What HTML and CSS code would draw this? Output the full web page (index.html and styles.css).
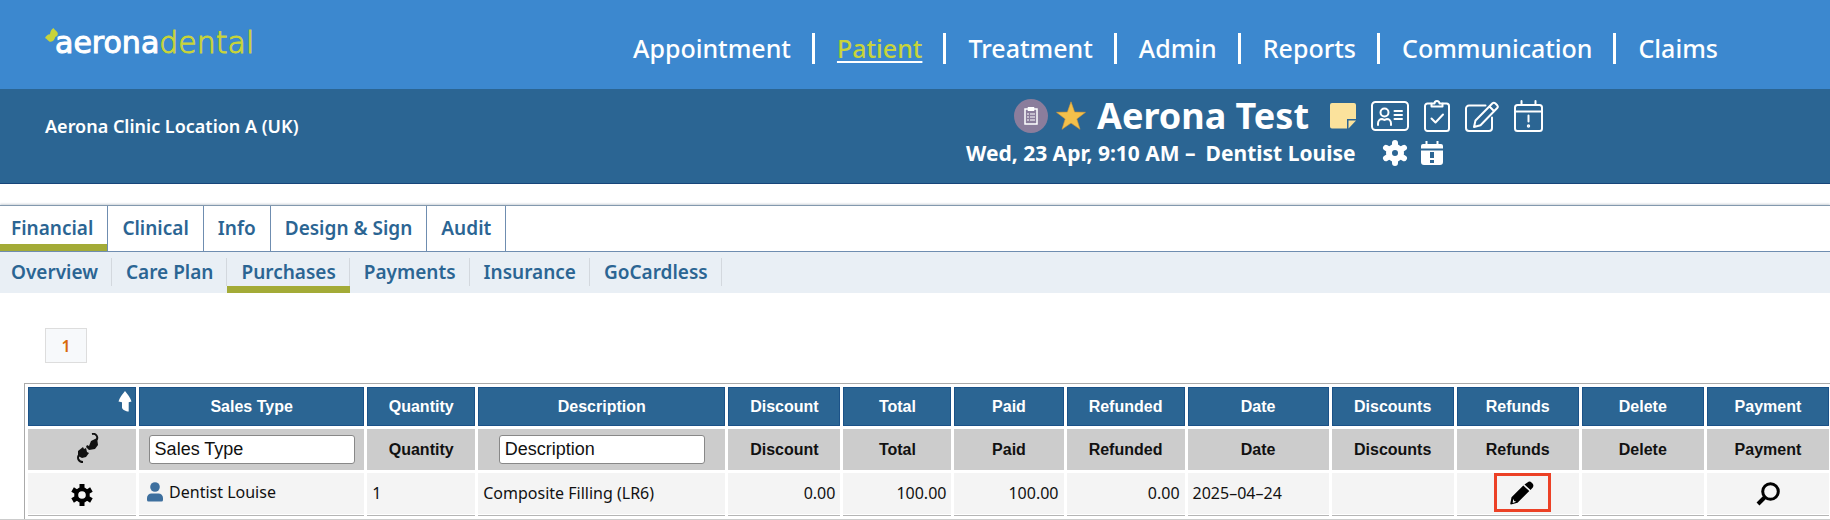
FILE: index.html
```html
<!DOCTYPE html>
<html lang="en">
<head>
<meta charset="utf-8">
<meta name="viewport" content="width=device-width, initial-scale=1">
<title>Aerona Dental – Purchases</title>
<link rel="stylesheet" href="styles.css">
</head>
<body>
<header class="topbar">
  <a class="logo" href="#">
    <svg class="logo-mark" width="14" height="15" viewBox="0 0 14 15" aria-hidden="true"><path fill="#c8d43a" d="M8.500 0c1 1.800 2.800 2.500 4 4.500 1 2-.3 4-2.200 4.500-.8 2.500-1.800 4.500-4.600 4.800C3.500 14 2.500 11 0 10c1.200-2 2.300-3.800 5-3.800C5.300 4 6 1.500 8.500 0z"/></svg>
    <span class="logo-strong">aerona</span><span class="logo-light">dental</span>
  </a>
  <nav class="mainnav" aria-label="Main">
    <a href="#">Appointment</a>
    <a href="#" class="active" aria-current="page">Patient</a>
    <a href="#">Treatment</a>
    <a href="#">Admin</a>
    <a href="#">Reports</a>
    <a href="#">Communication</a>
    <a href="#">Claims</a>
  </nav>
</header>

<section class="patientbar">
  <p class="location">Aerona Clinic Location A (UK)</p>
  <div class="patient">
    <div class="patient-head">
      <button class="badge" aria-label="Notes">
        <svg width="16" height="20" viewBox="0 0 16 20" fill="none" stroke="#fff" stroke-width="1.500"><path d="M2 3h12v15H2z"/><path fill="#fff" d="M5.500 1.800h5v2.400h-5z"/><path stroke-width="1.200" d="M4 8h2M7 8h5M4 11h2M7 11h5M4 14h2M7 14h5"/></svg>
      </button>
      <svg class="star" width="30" height="30" viewBox="0 0 30 30" aria-hidden="true"><path fill="#f3c04b" stroke="#d99b35" stroke-width=".6" d="M15 .8l3.600 10.300 10.900.2-8.700 6.600 3.200 10.400-9-6.200-9 6.200 3.200-10.400L.5 11.300l10.900-.2z"/></svg>
      <h1>Aerona Test</h1>
      <div class="tools">
        <button aria-label="Sticky note"><svg width="26" height="26" viewBox="0 0 26 26"><path fill="#fbe29c" d="M2 0h22a2 2 0 0 1 2 2v14h-9v9.500H2a2 2 0 0 1-2-2V2a2 2 0 0 1 2-2z"/><path fill="#fbe29c" d="M18.500 17.500H26l-7.500 8z"/></svg></button>
        <button aria-label="Patient card"><svg width="38" height="30" viewBox="0 0 38 30" fill="none" stroke="#fff" stroke-width="2" stroke-linecap="round"><rect x="1" y="1" width="36" height="28" rx="3.500"/><circle cx="13.500" cy="11.500" r="4"/><path d="M7 24v-1.500c0-3 2-4.500 4-4.500l2.500 1 2.500-1c2 0 4 1.500 4 4.500V24M23.500 10H31M23.500 14H31M23.500 18H31"/></svg></button>
        <button aria-label="Tasks"><svg width="26" height="34" viewBox="0 0 26 34" fill="none" stroke="#fff" stroke-width="2" stroke-linecap="round" stroke-linejoin="round"><path d="M7 4.500H3.500A2.500 2.500 0 0 0 1 7v22.500A2.500 2.500 0 0 0 3.500 32h19a2.500 2.500 0 0 0 2.500-2.500V7a2.500 2.500 0 0 0-2.500-2.500H19"/><path d="M7.500 7.500V4.500h3a2.500 2.500 0 0 1 5 0h3v3zM7.500 19.500l4 4 7.500-8"/></svg></button>
        <button aria-label="Edit patient"><svg width="34" height="31" viewBox="0 0 34 31" fill="none" stroke="#fff" stroke-width="2" stroke-linecap="round" stroke-linejoin="round"><path d="M20.500 4.500H4A3 3 0 0 0 1 7.500V27a3 3 0 0 0 3 3h20a3 3 0 0 0 3-3V16.500"/><path d="M9 26l1.500-6.500L27.500 2.300a2 2 0 0 1 2.700 0l2 2a2 2 0 0 1 0 2.700L15.500 24.300zM24.500 5.500l4.700 4.800"/></svg></button>
        <button aria-label="Appointment alert"><svg width="29" height="32" viewBox="0 0 29 32" fill="none" stroke="#fff" stroke-width="2" stroke-linecap="round"><rect x="1" y="5" width="27" height="26" rx="2.500"/><path d="M1 11.500h27M7.500 1v4M21.500 1v4M14.500 15.500v6"/><circle cx="14.500" cy="26" r=".7"/></svg></button>
      </div>
    </div>
    <div class="patient-sub">
      <span>Wed, 23 Apr, 9:10 AM –</span>
      <span>Dentist Louise</span>
      <div class="subtools">
        <button aria-label="Settings"><svg width="26" height="26" viewBox="0 0 26 26"><circle cx="13" cy="13" r="6" fill="none" stroke="#fff" stroke-width="6"/><path fill="none" stroke="#fff" stroke-width="6" stroke-linecap="round" d="M13 5V3M13 23v-2M6 9l-2-1.200M22 18.200L20 17M20 9l2-1.200M6 17l-2 1.200"/></svg></button>
        <button aria-label="Alerts"><svg width="22" height="24" viewBox="0 0 22 24"><path fill="#fff" d="M4.500 0h2v3h9V0h2v3H20a2 2 0 0 1 2 2v2.500H0V5a2 2 0 0 1 2-2h2.500zM0 9.500h22V21a3 3 0 0 1-3 3H3a3 3 0 0 1-3-3z"/><path fill="#2b6593" d="M9 11h4v6H9zM9 19h4v3H9z"/></svg></button>
      </div>
    </div>
  </div>
</section>

<main class="page">
  <nav class="tabs" aria-label="Patient sections">
    <a href="#" class="active">Financial</a>
    <a href="#">Clinical</a>
    <a href="#">Info</a>
    <a href="#">Design &amp; Sign</a>
    <a href="#">Audit</a>
  </nav>
  <nav class="subtabs" aria-label="Financial sections">
    <a href="#">Overview</a>
    <a href="#">Care Plan</a>
    <a href="#" class="active">Purchases</a>
    <a href="#">Payments</a>
    <a href="#">Insurance</a>
    <a href="#">GoCardless</a>
  </nav>

  <div class="pager"><button>1</button></div>

  <div class="grid-frame">
    <table class="grid">
      <colgroup>
        <col class="c-tool"><col class="c-type"><col class="c-qty"><col class="c-desc"><col class="c-disc"><col class="c-total"><col class="c-paid"><col class="c-refunded"><col class="c-date"><col class="c-action"><col class="c-action"><col class="c-action"><col class="c-action">
      </colgroup>
      <thead>
        <tr class="head">
          <th class="sort"><svg width="14" height="21" viewBox="0 0 14 21" role="img" aria-label="Sort ascending"><path fill="#fff" d="M7 0c2.500 3 5.500 7 6.500 10.500l-2.800.8V20.500C8 20.500 4 18.500 4 16.500v-5.200L.5 10.500C1.500 7 4.500 3 7 0z"/></svg></th>
          <th>Sales Type</th><th>Quantity</th><th>Description</th><th>Discount</th><th>Total</th><th>Paid</th><th>Refunded</th><th>Date</th><th>Discounts</th><th>Refunds</th><th>Delete</th><th>Payment</th>
        </tr>
        <tr class="filter">
          <th><button class="plug" aria-label="Connect"><svg width="24" height="30" viewBox="0 0 24 30"><path fill="none" stroke="#111" stroke-width="2" d="M16 1c4-1 6.500 3 4.500 6M7 29c-4.500 0-6.500-4-3.500-8"/><path fill="#111" d="M15 8l6-3 1 7-3 4-6 1-3-3 1-2 2 1zM2 18l5-4 1 2 2-1 1 4 2 1-3 4-4 1-4-2z"/></svg></button></th>
          <th><input type="text" aria-label="Sales Type" value="Sales Type"></th>
          <th>Quantity</th>
          <th><input type="text" aria-label="Description" value="Description"></th>
          <th>Discount</th><th>Total</th><th>Paid</th><th>Refunded</th><th>Date</th><th>Discounts</th><th>Refunds</th><th>Delete</th><th>Payment</th>
        </tr>
      </thead>
      <tbody>
        <tr>
          <td class="mid"><button aria-label="Row settings"><svg width="22" height="22" viewBox="0 0 22 22"><circle cx="11" cy="11" r="5.800" fill="none" stroke="#000" stroke-width="4"/><path fill="none" stroke="#000" stroke-width="5" d="M11 4.500V0M11 22v-4.500M5.400 7.800L1.600 5.500M20.400 16.500l-3.800-2.300M16.600 7.800l3.800-2.300M5.400 14.200l-3.800 2.300"/></svg></button></td>
          <td class="who"><div class="person"><svg width="16" height="20" viewBox="0 0 16 20" aria-hidden="true"><circle cx="8" cy="5" r="4.800" fill="#3d6f9e"/><path fill="#3d6f9e" d="M4.500 11.500h7a4.500 4.500 0 0 1 4.500 4.500v2a1.500 1.500 0 0 1-1.500 1.500h-13A1.500 1.500 0 0 1 0 18v-2a4.500 4.500 0 0 1 4.500-4.500z"/></svg>Dentist Louise</div></td>
          <td>1</td>
          <td>Composite Filling (LR6)</td>
          <td class="num">0.00</td>
          <td class="num">100.00</td>
          <td class="num">100.00</td>
          <td class="num">0.00</td>
          <td>2025–04–24</td>
          <td></td>
          <td class="mid refund"><button class="marked" aria-label="Refund"><svg width="24" height="24" viewBox="0 0 24 24"><path fill="#000" d="M18.500.8a3 3 0 0 1 3 .6l1 1a3.500 3.500 0 0 1 .5 3.800L20.500 9 14.500 3.500zM13.300 4.600l6 5.500L7.500 21.800 1 23.500c-.6 0-.8-.4-.7-1l1.200-6.300z"/><path fill="#f4f4f4" d="M3.200 17.800l1 2.200 2 .7-3.500 1.200z"/></svg></button></td>
          <td></td>
          <td class="mid"><button aria-label="View payment"><svg width="24" height="24" viewBox="0 0 24 24" fill="none" stroke="#000"><circle cx="14.500" cy="9.500" r="7.800" stroke-width="3"/><path stroke-width="4" d="M9.500 14.500L2 22"/></svg></button></td>
        </tr>
      </tbody>
    </table>
  </div>
</main>
</body>
</html>
```
FILE: styles.css
```css
* { box-sizing: border-box; }

body {
  margin: 0;
  background: #fff;
  color: #111;
  font-family: "Noto Sans", "Open Sans", sans-serif;
  font-size: 16px;
}

a { color: inherit; text-decoration: none; }

button {
  padding: 0;
  border: 0;
  background: none;
  font: inherit;
  color: inherit;
  cursor: pointer;
}

svg { display: block; }

/* Top bar */
.topbar {
  display: flex;
  justify-content: space-between;
  height: 89px;
  padding: 0 112px 0 45px;
  background: #3c88cf;
  color: #fff;
}

.logo {
  display: flex;
  align-items: flex-start;
  padding-top: 25px;
  font-family: "DejaVu Sans", sans-serif;
  font-size: 30px;
  line-height: 36px;
}

.logo-mark { margin: 3px -4px 0 0; }
.logo-strong { -webkit-text-stroke: 1px #fff; }

.logo-light {
  color: #c8d43a;
  font-weight: 200;
  -webkit-text-stroke: 1px #c8d43a;
}

.mainnav {
  display: flex;
  align-items: flex-start;
  padding-top: 33px;
  font-size: 25px;
  line-height: 31px;
  font-weight: 500;
}

.mainnav a + a {
  margin-left: 21px;
  padding-left: 22px;
  border-left: 3px solid #fff;
}

.mainnav .active {
  color: #c8d43a;
  text-decoration: underline #fff 2px;
  text-underline-offset: 3px;
}

/* Patient bar */
.patientbar {
  display: grid;
  grid-template-columns: 966fr 864fr;
  height: 95px;
  border-bottom: 1px solid #17457a;
  background: #2b6593;
  color: #fff;
}

.location {
  margin: 0;
  padding: 24px 0 0 45px;
  font-size: 18px;
  line-height: 26px;
  font-weight: 600;
}

.patient { padding-top: 9px; }

.patient-head {
  display: flex;
  align-items: center;
  height: 36px;
  padding-left: 48px;
}

.badge {
  display: grid;
  place-items: center;
  width: 34px;
  height: 34px;
  border-radius: 50%;
  background: #8b7d9c;
}

.star { margin: 0 11px 0 8px; }

h1 {
  margin: 0;
  font-size: 36px;
  line-height: 36px;
  font-weight: 700;
}

.tools {
  display: flex;
  align-items: center;
  gap: 15px;
  margin-left: 21px;
}

.patient-sub {
  display: flex;
  align-items: center;
  gap: 10px;
  height: 38px;
  font-size: 21px;
  line-height: 26px;
  font-weight: 700;
}

.subtools {
  display: flex;
  align-items: center;
  gap: 13px;
  margin-left: 16px;
}

/* Page */
.page {
  overflow: hidden;
  padding-top: 21px;
  border-bottom: 2px solid #ccc;
}

.tabs,
.subtabs {
  display: flex;
  color: #2b6593;
  font-size: 19px;
  font-weight: 600;
}

.tabs {
  height: 47px;
  border-top: 1px solid #8399ae;
  border-bottom: 1px solid #6f8db0;
  box-shadow: 0 -1px 2px #ccd2d8;
  line-height: 45px;
}

.tabs a {
  padding: 0 14px;
  border-right: 1px solid #6f8db0;
}

.tabs a:first-child,
.subtabs a:first-child { padding-left: 11px; }

.tabs .active { box-shadow: inset 0 -7px #a3ab37; }

.subtabs {
  height: 41px;
  background: #e9eff5;
  line-height: 41px;
}

.subtabs a {
  padding: 0 14px;
  background: linear-gradient(#d3d8de, #d3d8de) right 6px / 1px 28px no-repeat;
}

.subtabs .active { box-shadow: inset 0 -7px #a3ab37; }

.pager { padding: 35px 45px 20px; }

.pager button {
  display: block;
  width: 42px;
  height: 35px;
  border: 1px solid #ddd;
  background: #f7f9fb;
  color: #d9680c;
  font-size: 16px;
  font-weight: 600;
}

/* Purchases table */
.grid-frame {
  margin: 0 -2px 0 24px;
  border-top: 1px solid #aaa;
  border-left: 1px solid #aaa;
}

.grid {
  width: 100%;
  border-spacing: 3px 3px;
  table-layout: fixed;
}

.c-tool, .c-qty, .c-total { width: 108px; }
.c-type { width: 225px; }
.c-desc { width: 247px; }
.c-disc { width: 112px; }
.c-paid { width: 109px; }
.c-refunded { width: 118px; }
.c-date { width: 141px; }
.c-action { width: 122px; }

.grid th {
  padding: 0;
  font: bold 16px "Liberation Sans", Arial, sans-serif;
}

.head th {
  height: 39px;
  border: 1px solid #1b5288;
  background: #2b6593;
  color: #fff;
}

.head .sort { vertical-align: top; }
.sort svg { margin: 3px 3px 0 auto; }

.filter th { height: 41px; background: #ccc; }
.plug svg { margin-left: 12px; }

.filter input {
  width: 206px;
  height: 29px;
  padding: 0 5px;
  border: 1px solid #888;
  border-radius: 3px;
  background: #fff;
  color: #111;
  font: 18px "Liberation Sans", Arial, sans-serif;
  vertical-align: middle;
}

.grid td {
  height: 43px;
  padding: 0 5px 2px;
  border-bottom: 1px solid #b5b5b5;
  background: #f4f4f4;
  box-shadow: inset 0 -1px #fff;
}

.grid .num { text-align: right; }
.grid .mid { padding: 0; text-align: center; }
.mid button { vertical-align: middle; }
.grid .who { padding: 0 8px 4px; }

.person {
  display: flex;
  align-items: center;
  gap: 6px;
}

.grid .refund {
  padding-left: 9px;
  vertical-align: top;
}

.marked {
  display: inline-grid;
  place-items: center;
  width: 57px;
  height: 39px;
  border: 3px solid #ec4126;
}

.refund .marked { vertical-align: top; }
```
